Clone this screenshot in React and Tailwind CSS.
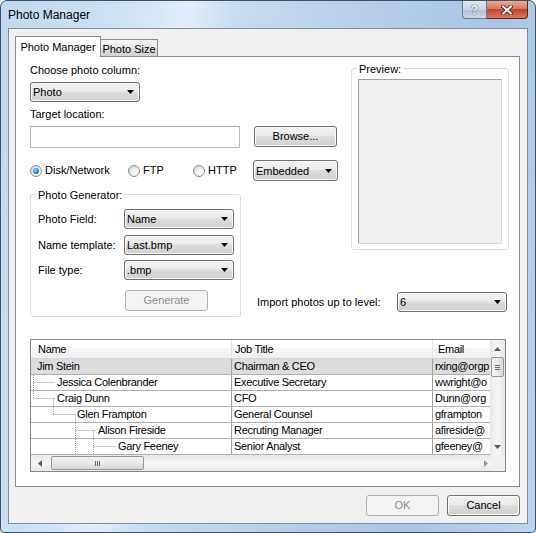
import React from "react";

const btnBg =
  "bg-[linear-gradient(#f3f3f3_0%,#ebebeb_45%,#dddddd_50%,#cfcfcf_100%)]";

function DropArrow() {
  return (
    <svg width="7" height="4" viewBox="0 0 7 4" className="shrink-0">
      <polygon points="0,0 7,0 3.5,4" fill="#000" />
    </svg>
  );
}

function Combo({ value, className }) {
  return (
    <div
      className={`flex items-center justify-between rounded-[3px] border border-[#707070] ${btnBg} pl-[2px] pr-[5px] shadow-[inset_0_0_0_1px_#f8f8f8] ${className}`}
    >
      <span className="leading-[14px]">{value}</span>
      <DropArrow />
    </div>
  );
}

function Button({ label, className, disabled }) {
  if (disabled) {
    return (
      <div
        className={`flex items-center justify-center rounded-[3px] border border-[#adb2b5] bg-[#f4f4f4] text-[#8d8d8d] ${className}`}
      >
        {label}
      </div>
    );
  }
  return (
    <div
      className={`flex items-center justify-center rounded-[3px] border border-[#707070] ${btnBg} shadow-[inset_0_0_0_1px_#fbfbfb] ${className}`}
    >
      {label}
    </div>
  );
}

function Radio({ checked, label, className }) {
  return (
    <div className={`flex items-center ${className}`}>
      <div className="flex h-[12px] w-[12px] items-center justify-center rounded-full border border-[#8e8f8f] bg-[radial-gradient(circle_at_65%_70%,#ffffff_0%,#eeeeee_45%,#c9c9c9_100%)]">
        {checked && (
          <div className="h-[6px] w-[6px] rounded-full bg-[radial-gradient(circle_at_40%_35%,#9ad8fa_0%,#2b86c9_55%,#0b4578_100%)]" />
        )}
      </div>
      <span className="ml-[3px]">{label}</span>
    </div>
  );
}

function GroupLabel({ text }) {
  return (
    <span className="-mt-[8px] ml-[5px] block w-fit bg-white px-[2px] leading-[16px]">
      {text}
    </span>
  );
}

const rows = [
  {
    name: "Jim Stein",
    title: "Chairman & CEO",
    email: "rxing@orgp",
    indent: 6,
    lines: [],
    selected: true,
  },
  {
    name: "Jessica Colenbrander",
    title: "Executive Secretary",
    email: "wwright@o",
    indent: 26,
    lines: ["M2.5 0V15", "M2.5 7.5H24"],
  },
  {
    name: "Craig Dunn",
    title: "CFO",
    email: "Dunn@org",
    indent: 26,
    lines: ["M2.5 0V7.5", "M2.5 7.5H24", "M22.5 7.5V15"],
  },
  {
    name: "Glen Frampton",
    title: "General Counsel",
    email: "gframpton",
    indent: 46,
    lines: ["M22.5 0V7.5", "M22.5 7.5H44", "M44.5 7.5V15"],
  },
  {
    name: "Alison Fireside",
    title: "Recruting Manager",
    email: "afireside@",
    indent: 67,
    lines: ["M44.5 0V15", "M44.5 7.5H65", "M62.5 7.5V15"],
  },
  {
    name: "Gary Feeney",
    title: "Senior Analyst",
    email: "gfeeney@",
    indent: 87,
    lines: ["M44.5 0V15", "M62.5 0V15", "M62.5 7.5H85"],
  },
];

function TreeGrid() {
  return (
    <div className="mt-[22px] flex h-[133px] w-[476px] flex-col border border-[#828790] bg-white">
      <div className="flex h-[115px]">
        <div className="w-[459px] overflow-hidden text-[11px] tracking-[-0.3px]">
          {/* header */}
          <div className="flex h-[19px] border-b border-[#d5d5d5] bg-[linear-gradient(#ffffff_0%,#ffffff_45%,#f6f7f8_46%,#eff0f2_100%)]">
            <div className="w-[201px] shrink-0 border-r border-[#e3e4e6] pl-[7px] leading-[18px]">
              Name
            </div>
            <div className="w-[201px] shrink-0 border-r border-[#e3e4e6] pl-[3px] leading-[18px]">
              Job Title
            </div>
            <div className="w-[57px] shrink-0 pl-[5px] leading-[18px]">Email</div>
          </div>
          {rows.map((r) => (
            <div
              key={r.name}
              className={`flex h-[16px] border-b border-[#b1b1b1] ${r.selected ? "bg-[#dcdcdc]" : "bg-white"}`}
            >
              <div className="flex w-[201px] shrink-0 items-center overflow-hidden whitespace-nowrap border-r border-[#a0a0a0]">
                <svg
                  width={r.indent}
                  height="15"
                  className="shrink-0"
                  viewBox={`0 0 ${r.indent} 15`}
                >
                  {r.lines.map((d) => (
                    <path
                      key={d}
                      d={d}
                      stroke="#9a9a9a"
                      strokeWidth="1"
                      strokeDasharray="1 1"
                      fill="none"
                    />
                  ))}
                </svg>
                <span className="leading-[15px]">{r.name}</span>
              </div>
              <div className="w-[201px] shrink-0 overflow-hidden whitespace-nowrap border-r border-[#a0a0a0] pl-[2px] leading-[15px]">
                {r.title}
              </div>
              <div className="w-[57px] shrink-0 overflow-hidden whitespace-nowrap pl-[2px] leading-[15px]">
                {r.email}
              </div>
            </div>
          ))}
        </div>
        {/* vertical scrollbar */}
        <div className="flex w-[15px] flex-col bg-[linear-gradient(90deg,#e6e6e6_0%,#f4f4f4_40%,#f4f4f4_60%,#e6e6e6_100%)]">
          <div className="flex h-[17px] items-center justify-center">
            <svg width="7" height="4" viewBox="0 0 7 4">
              <polygon points="0,4 7,4 3.5,0" fill="#5a5a5a" />
            </svg>
          </div>
          <div className="mx-[1px] flex h-[20px] flex-col items-center justify-center gap-[1px] rounded-[2px] border border-[#979797] bg-[linear-gradient(90deg,#f2f2f2_0%,#e9e9e9_50%,#d6d6d6_100%)]">
            <div className="h-px w-[5px] bg-[#6f6f6f]" />
            <div className="h-px w-[5px] bg-[#6f6f6f]" />
            <div className="h-px w-[5px] bg-[#6f6f6f]" />
          </div>
          <div className="flex-1" />
          <div className="flex h-[17px] items-center justify-center">
            <svg width="7" height="4" viewBox="0 0 7 4">
              <polygon points="0,0 7,0 3.5,4" fill="#5a5a5a" />
            </svg>
          </div>
        </div>
      </div>
      {/* horizontal scrollbar */}
      <div className="flex h-[16px]">
        <div className="flex w-[459px] items-center bg-[linear-gradient(#e6e6e6_0%,#f4f4f4_40%,#f4f4f4_60%,#e6e6e6_100%)]">
          <div className="flex w-[17px] items-center justify-center">
            <svg width="4" height="7" viewBox="0 0 4 7">
              <polygon points="4,0 4,7 0,3.5" fill="#5a5a5a" />
            </svg>
          </div>
          <div className="ml-[3px] flex h-[14px] w-[93px] items-center justify-center gap-[1px] rounded-[2px] border border-[#979797] bg-[linear-gradient(#f2f2f2_0%,#e9e9e9_50%,#d6d6d6_100%)]">
            <div className="h-[5px] w-px bg-[#6f6f6f]" />
            <div className="h-[5px] w-px bg-[#6f6f6f]" />
            <div className="h-[5px] w-px bg-[#6f6f6f]" />
          </div>
          <div className="flex-1" />
          <div className="flex w-[6px] items-center">
            <svg width="4" height="7" viewBox="0 0 4 7">
              <polygon points="0,0 0,7 4,3.5" fill="#9a9a9a" />
            </svg>
          </div>
        </div>
        <div className="w-[15px] bg-[#f0f0f0]" />
      </div>
    </div>
  );
}

export default function App() {
  return (
    <div className="h-[533px] w-[536px] overflow-hidden bg-white font-['Liberation_Sans',Arial,sans-serif] text-[11px] text-black">
      <div className="flex h-full flex-col rounded-t-[7px] rounded-b-[4px] border border-[#3d5166] bg-[linear-gradient(100deg,#c3d8ee_0%,#cfe1f3_20%,#e2edf8_30%,#c8dbef_38%,#b6cee8_60%,#a9c5e3_80%,#bdd5ed_100%)]">
        {/* title bar */}
        <div className="flex h-[27px] shrink-0 items-start">
          <span className="pl-[7px] pt-[7px] text-[12px] leading-[15px]">
            Photo Manager
          </span>
          <div className="ml-auto mr-[7px] flex">
            <div className="flex h-[18px] w-[25px] items-center justify-center rounded-bl-[4px] border border-t-0 border-[#6b7a8c] bg-[linear-gradient(#dfe8f2_0%,#c8d6e5_50%,#afc0d4_51%,#c9d8ea_100%)] text-[13px] font-bold text-white [text-shadow:0_0_1px_#2d3b4a,0_0_1px_#2d3b4a]">
              ?
            </div>
            <div className="flex h-[18px] w-[41px] items-center justify-center rounded-br-[4px] border border-l-0 border-t-0 border-[#5a2820] bg-[linear-gradient(#eaa899_0%,#d9785f_45%,#c7432a_50%,#d47a63_100%)]">
              <svg width="12" height="10" viewBox="0 0 12 10">
                <path
                  d="M2 1.5L10 8.5M10 1.5L2 8.5"
                  stroke="#4a1a12"
                  strokeWidth="3.6"
                  strokeLinecap="square"
                />
                <path
                  d="M2 1.5L10 8.5M10 1.5L2 8.5"
                  stroke="#ffffff"
                  strokeWidth="2"
                  strokeLinecap="square"
                />
              </svg>
            </div>
          </div>
        </div>

        {/* client area */}
        <div className="mx-[7px] mb-[8px] flex flex-1 flex-col border border-[#7d8ea2] bg-[#f0f0f0] pt-[7px]">
          {/* tabs */}
          <div className="flex h-[20px] items-end pl-[6px]">
            <div className="relative z-10 -mb-px flex h-[21px] w-[86px] justify-center border border-b-0 border-[#898c95] bg-white pt-[3px] leading-[14px]">
              Photo Manager
            </div>
            <div className="flex h-[17px] w-[57px] justify-center border border-b-0 border-l-0 border-[#898c95] bg-[linear-gradient(#f4f4f4_0%,#e9e9e9_50%,#dcdcdc_51%,#d3d3d3_100%)] pt-[2px] leading-[14px]">
              Photo Size
            </div>
          </div>

          {/* tab panel */}
          <div className="ml-[6px] h-[431px] w-[505px] border border-[#898c95] bg-white pl-[14px] pt-[3px]">
            <div className="grid grid-cols-[211px_110px_158px] grid-rows-[134px_56px_67px]">
              {/* top-left controls */}
              <div className="col-span-2 row-start-1 flex flex-col">
                <span className="mt-[2px] leading-[16px]">Choose photo column:</span>
                <Combo value="Photo" className="mt-[4px] h-[20px] w-[110px]" />
                <span className="mt-[4px] leading-[16px]">Target location:</span>
                <div className="mt-[4px] flex items-start">
                  <div className="h-[22px] w-[210px] border border-[#b9bdc3] border-t-[#abadb3] bg-white" />
                  <Button label="Browse..." className="ml-[14px] h-[21px] w-[83px]" />
                </div>
                <div className="mt-[12px] flex h-[21px] items-center">
                  <Radio checked label="Disk/Network" className="w-[98px]" />
                  <Radio label="FTP" className="w-[65px]" />
                  <Radio label="HTTP" className="w-[60px]" />
                  <Combo value="Embedded" className="h-[21px] w-[85px]" />
                </div>
              </div>

              {/* preview */}
              <div className="col-start-3 row-span-2 row-start-1 mt-[8px] flex flex-col rounded-[3px] border border-[#d5dfe5]">
                <GroupLabel text="Preview:" />
                <div className="mx-[6px] mb-[5px] mt-[2px] flex-1 border border-[#a3a3a3] border-b-[#d8d8d8] border-r-[#d8d8d8] bg-[#f0f0f0]" />
              </div>

              {/* photo generator */}
              <div className="col-start-1 row-span-2 row-start-2 flex flex-col rounded-[3px] border border-[#d5dfe5] pl-[7px]">
                <span className="-ml-[2px] -mt-[8px] block w-fit bg-white px-[2px] leading-[16px]">
                  Photo Generator:
                </span>
                <div className="mt-[6px] flex items-center">
                  <span className="w-[86px]">Photo Field:</span>
                  <Combo value="Name" className="h-[20px] w-[110px]" />
                </div>
                <div className="mt-[6px] flex items-center">
                  <span className="w-[86px]">Name template:</span>
                  <Combo value="Last.bmp" className="h-[20px] w-[110px]" />
                </div>
                <div className="mt-[5px] flex items-center">
                  <span className="w-[86px]">File type:</span>
                  <Combo value=".bmp" className="h-[20px] w-[110px]" />
                </div>
                <Button
                  disabled
                  label="Generate"
                  className="ml-[87px] mt-[10px] h-[21px] w-[83px]"
                />
              </div>

              {/* import level */}
              <div className="col-span-2 col-start-2 row-start-3 mb-[5px] flex items-center self-end pl-[16px]">
                <span>Import photos up to level:</span>
                <Combo value="6" className="ml-auto mr-[2px] h-[20px] w-[110px]" />
              </div>
            </div>

            <TreeGrid />
          </div>

          {/* dialog buttons */}
          <div className="mt-[8px] flex justify-end gap-[8px] pr-[7px]">
            <Button disabled label="OK" className="h-[21px] w-[73px]" />
            <Button label="Cancel" className="h-[21px] w-[73px]" />
          </div>
        </div>
      </div>
    </div>
  );
}
